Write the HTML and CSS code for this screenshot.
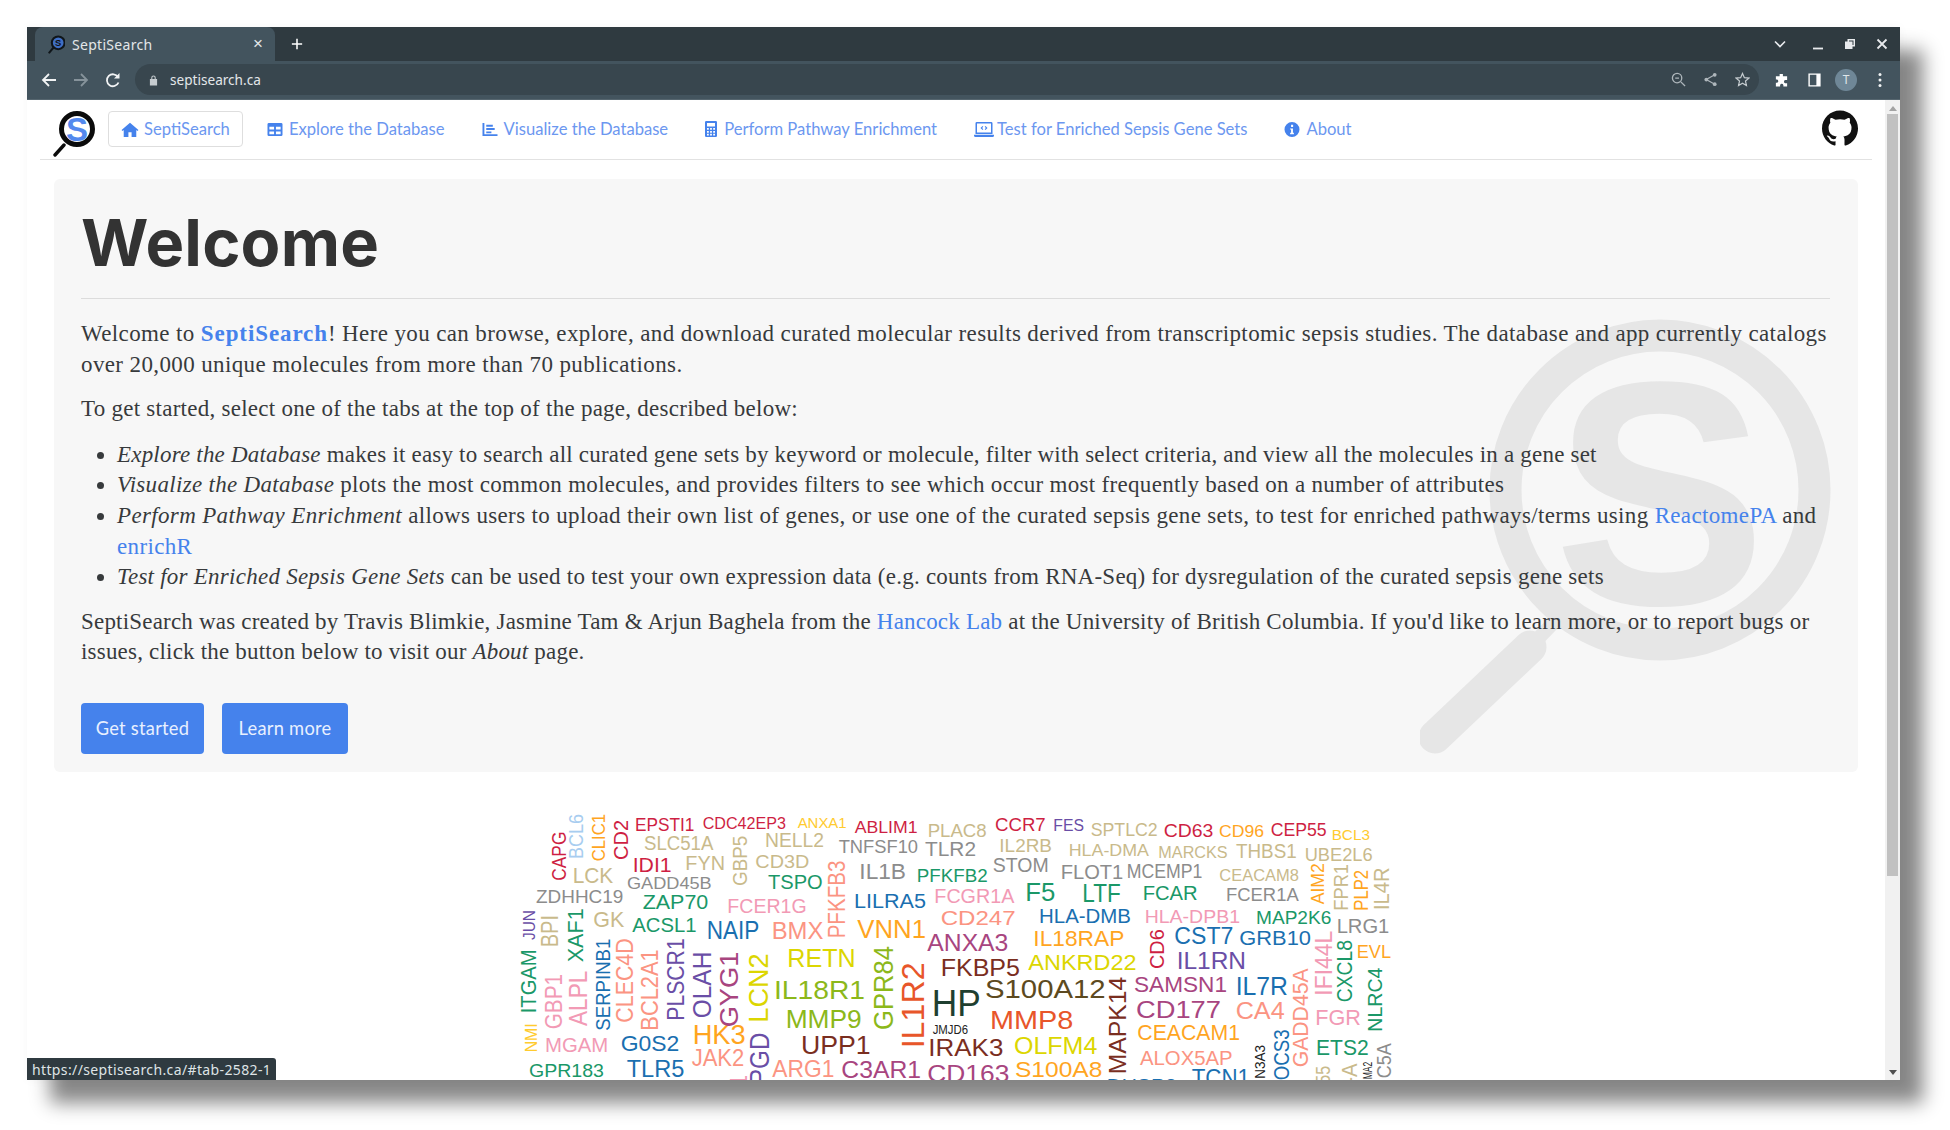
FILE: index.html
```html
<!DOCTYPE html>
<html lang="en">
<head>
<meta charset="utf-8">
<title>SeptiSearch</title>
<link rel="stylesheet" href="styles.css">
</head>
<body>
<div class="window">
  <div class="tabstrip">
    <div class="tab">
      <svg class="favicon" viewBox="0 0 20 22"><circle cx="12" cy="9" r="7.500" fill="#3f6fc4" stroke="#10161a" stroke-width="2.400"/><path d="M6.500 14.500 1.500 20.500" stroke="#10161a" stroke-width="2.400" stroke-linecap="round"/><text x="12" y="12.500" text-anchor="middle" class="fav-s">S</text></svg>
      <span class="tab-title">SeptiSearch</span>
      <span class="tab-close">×</span>
    </div>
    <svg class="newtab" viewBox="0 0 14 14"><path d="M7 1v12M1 7h12" stroke="#fff" stroke-width="1.800"/></svg>
    <div class="winctl">
      <svg class="ctl ctl-chev" viewBox="0 0 12 8"><path d="M1 1.500 6 6.500 11 1.500" fill="none" stroke="#e8eaed" stroke-width="1.600"/></svg>
      <svg class="ctl ctl-min" viewBox="0 0 12 12"><path d="M1 10.500h10" stroke="#e8eaed" stroke-width="1.800"/></svg>
      <svg class="ctl ctl-res" viewBox="0 0 12 12"><path d="M3.500 1h7.500v7.500H8.500V11H1V3.500h2.500z M5 2.500v1h3.500v3.500h1v-4.500z" fill="#e8eaed" fill-rule="evenodd"/></svg>
      <svg class="ctl ctl-x" viewBox="0 0 12 12"><path d="M1.500 1.500 10.500 10.500M10.500 1.500 1.500 10.500" stroke="#e8eaed" stroke-width="1.800"/></svg>
    </div>
  </div>
  <div class="toolbar">
    <svg class="tb tb-back" viewBox="0 0 16 16"><path d="M15 8H2M8 2 2 8l6 6" fill="none" stroke="#f1f3f4" stroke-width="1.800"/></svg>
    <svg class="tb tb-fwd" viewBox="0 0 16 16"><path d="M1 8h13M8 2l6 6-6 6" fill="none" stroke="#86939b" stroke-width="1.800"/></svg>
    <svg class="tb tb-reload" viewBox="0 0 16 16"><path d="M13.500 10.500A6 6 0 1 1 13 5" fill="none" stroke="#f1f3f4" stroke-width="1.800"/><path d="M14.500 1v5.500H9z" fill="#f1f3f4"/></svg>
    <div class="omnibox">
      <svg class="lock" viewBox="0 0 10 12"><path d="M2.500 5V3.500a2.500 2.500 0 0 1 5 0V5h1.500v7H1V5zM3.700 5h2.600V3.500a1.300 1.300 0 0 0-2.600 0z" fill="#c6ccd0" fill-rule="evenodd"/></svg>
      <span class="url">septisearch.ca</span>
      <div class="omni-icons">
        <svg class="oi" viewBox="0 0 16 16"><circle cx="6.500" cy="6.500" r="5" fill="none" stroke="#aeb6bb" stroke-width="1.400"/><path d="M10.500 10.500 15 15M4.500 6.500h4" stroke="#aeb6bb" stroke-width="1.400"/></svg>
        <svg class="oi" viewBox="0 0 16 16"><path d="M12.500 3 3.500 8l9 5" fill="none" stroke="#aeb6bb" stroke-width="1.300"/><circle cx="12.500" cy="3" r="2" fill="#aeb6bb"/><circle cx="3.500" cy="8" r="2" fill="#aeb6bb"/><circle cx="12.500" cy="13" r="2" fill="#aeb6bb"/></svg>
        <svg class="oi" viewBox="0 0 16 16"><path d="M8 1.500 10 6l4.800.5-3.600 3.200 1 4.800L8 12l-4.200 2.500 1-4.800L1.200 6.500 6 6z" fill="none" stroke="#c6ccd0" stroke-width="1.300"/></svg>
      </div>
    </div>
    <div class="tb-right">
      <svg class="tr" viewBox="0 0 16 16"><path d="M6 1.500h3.500v2.500H14v4h-2a1.800 1.800 0 0 0 0 3.500h2V15H10v-1.500a1.800 1.800 0 0 0-3.500 0V15H2v-4h1.200a1.800 1.800 0 0 0 0-3.500H2V4h4z" fill="#fff"/></svg>
      <svg class="tr" viewBox="0 0 16 16"><path d="M1.500 1h13v14h-13zM3 2.500v11h7v-11z" fill="#fff" fill-rule="evenodd"/></svg>
      <span class="avatar">T</span>
      <svg class="tr tr-dots" viewBox="0 0 4 16"><circle cx="2" cy="2.500" r="1.500" fill="#f1f3f4"/><circle cx="2" cy="8" r="1.500" fill="#f1f3f4"/><circle cx="2" cy="13.500" r="1.500" fill="#f1f3f4"/></svg>
    </div>
  </div>

  <div class="viewport">
    <div class="page">
      <nav class="nav">
        <svg class="logo" viewBox="0 0 44 46"><circle cx="24" cy="18" r="15.500" fill="#fff" stroke="#0b0b0b" stroke-width="5"/><path d="M11 34 2 44" stroke="#0b0b0b" stroke-width="3.400" stroke-linecap="round"/><text x="24" y="29.500" text-anchor="middle" class="logo-s">S</text></svg>
        <ul class="tabs">
          <li><a class="tab-link active"><svg class="nav-ico nav-ico-home" viewBox="0 0 18 16"><path d="M9 .8 0 8.500l1 1.200 1.300-1.100V16h5v-5h3.400v5h5V8.600L17 9.700l1-1.200z"/></svg>SeptiSearch</a></li>
          <li><a class="tab-link"><svg class="nav-ico" viewBox="0 0 16 16"><path d="M1.500 1h13A1.500 1.500 0 0 1 16 2.500v11a1.500 1.500 0 0 1-1.500 1.500h-13A1.500 1.500 0 0 1 0 13.500v-11A1.500 1.500 0 0 1 1.500 1zM2 5v3h5V5zm7 0v3h5V5zM2 10v3h5v-3zm7 0v3h5v-3z" fill-rule="evenodd"/></svg>Explore the Database</a></li>
          <li><a class="tab-link"><svg class="nav-ico" viewBox="0 0 16 16"><path d="M0 1h2v12h14v2H0zM4 3h7v2H4zM4 6.500h9v2H4zM4 10h5.500v2H4z"/></svg>Visualize the Database</a></li>
          <li><a class="tab-link"><svg class="nav-ico nav-ico-file" viewBox="0 0 12 16"><path d="M1.200 0h9.600A1.200 1.200 0 0 1 12 1.200v13.600a1.200 1.200 0 0 1-1.200 1.200H1.200A1.200 1.200 0 0 1 0 14.800V1.200A1.200 1.200 0 0 1 1.200 0zM2 2v3.500h8V2zM2 7v1.800h1.800V7zm3.100 0v1.800h1.800V7zm3.100 0v1.800H10V7zM2 10v1.800h1.800V10zm3.100 0v1.800h1.800V10zm3.100 0v1.800H10V10zM2 12.800V14.500h1.800v-1.700zm3.100 0v1.700h1.800v-1.700zm3.100 0v1.700H10v-1.700z" fill-rule="evenodd"/></svg>Perform Pathway Enrichment</a></li>
          <li><a class="tab-link"><svg class="nav-ico nav-ico-wide" viewBox="0 0 20 15"><path d="M2.800 0h14.400A1.300 1.300 0 0 1 18.500 1.300V12h-17V1.300A1.300 1.300 0 0 1 2.800 0zM3 1.500V10.500h14V1.500zM0 12.800h20v.7A1.500 1.500 0 0 1 18.500 15h-17A1.500 1.500 0 0 1 0 13.500zM8.500 4 6.500 6l2 2 .8-.8L8.100 6l1.200-1.200zM11.500 4l2 2-2 2-.8-.8L11.900 6l-1.200-1.200z" fill-rule="evenodd"/></svg>Test for Enriched Sepsis Gene Sets</a></li>
          <li><a class="tab-link"><svg class="nav-ico" viewBox="0 0 16 16"><path d="M8 0a8 8 0 1 1 0 16A8 8 0 0 1 8 0zM7 3v2.200h2.200V3zM6 6.800V8h1v3.500H6V13h4v-1.500H9V6.800z" fill-rule="evenodd"/></svg>About</a></li>
        </ul>
        <svg class="github" viewBox="0 0 16 16"><path d="M8 0C3.580 0 0 3.580 0 8c0 3.540 2.290 6.530 5.470 7.590.4.070.55-.17.55-.38 0-.19-.01-.82-.01-1.490-2.010.37-2.530-.49-2.690-.94-.09-.23-.48-.94-.82-1.130-.28-.15-.68-.52-.01-.53.63-.01 1.080.58 1.230.82.72 1.210 1.870.87 2.330.66.07-.52.28-.87.51-1.070-1.780-.2-3.640-.89-3.640-3.950 0-.87.31-1.590.82-2.150-.08-.2-.36-1.020.08-2.120 0 0 .67-.21 2.200.82.64-.18 1.320-.27 2-.27.68 0 1.360.09 2 .27 1.530-1.040 2.200-.82 2.200-.82.44 1.100.16 1.920.08 2.120.51.56.82 1.270.82 2.150 0 3.070-1.870 3.750-3.650 3.950.29.25.54.73.54 1.480 0 1.070-.01 1.930-.01 2.200 0 .21.15.46.55.38A8.013 8.013 0 0 0 16 8c0-4.420-3.580-8-8-8z"/></svg>
      </nav>

      <section class="jumbotron">
        <svg class="watermark" viewBox="0 0 420 460">
          <circle cx="240" cy="181" r="154.500" fill="none" stroke="#e6e6e6" stroke-width="32"/>
          <path d="M110 338 137 310" stroke="#e6e6e6" stroke-width="14"/>
          <path d="M15 428 110 338" stroke="#e6e6e6" stroke-width="33" stroke-linecap="round"/>
          <text x="240" y="295" text-anchor="middle" class="wm-s">S</text>
        </svg>
        <div class="jumbo-body">
          <h1 class="display">Welcome</h1>
          <hr class="rule">
          <p class="para para-lead">Welcome to <a class="link strong">SeptiSearch</a>! Here you can browse, explore, and download curated molecular results derived from transcriptomic sepsis studies. The database and app currently catalogs over 20,000 unique molecules from more than 70 publications.</p>
          <p class="para">To get started, select one of the tabs at the top of the page, described below:</p>
          <ul class="features">
            <li><em>Explore the Database</em> makes it easy to search all curated gene sets by keyword or molecule, filter with select criteria, and view all the molecules in a gene set</li>
            <li><em>Visualize the Database</em> plots the most common molecules, and provides filters to see which occur most frequently based on a number of attributes</li>
            <li><em>Perform Pathway Enrichment</em> allows users to upload their own list of genes, or use one of the curated sepsis gene sets, to test for enriched pathways/terms using <a class="link">ReactomePA</a> and <a class="link">enrichR</a></li>
            <li><em>Test for Enriched Sepsis Gene Sets</em> can be used to test your own expression data (e.g. counts from RNA-Seq) for dysregulation of the curated sepsis gene sets</li>
          </ul>
          <p class="para para-last">SeptiSearch was created by Travis Blimkie, Jasmine Tam &amp; Arjun Baghela from the <a class="link">Hancock Lab</a> at the University of British Columbia. If you'd like to learn more, or to report bugs or issues, click the button below to visit our <em>About</em> page.</p>
          <div class="actions">
            <a class="btn btn-a">Get started</a>
            <a class="btn btn-b">Learn more</a>
          </div>
        </div>
      </section>

      <svg class="cloud" viewBox="0 0 2850 870">
        <g class="r"><text x="405" y="122" font-size="56" textLength="178" lengthAdjust="spacingAndGlyphs">EPSTI1</text><text x="608" y="117" font-size="49" textLength="250" lengthAdjust="spacingAndGlyphs">CDC42EP3</text><text x="1064" y="128" font-size="49" textLength="189" lengthAdjust="spacingAndGlyphs">ABLIM1</text><text x="398" y="245" font-size="61" textLength="117" lengthAdjust="spacingAndGlyphs">IDI1</text>
          <text transform="translate(385 210) rotate(-90)" font-size="63" textLength="120" lengthAdjust="spacingAndGlyphs">CD2</text><text transform="translate(198 272) rotate(-90)" font-size="60" textLength="147" lengthAdjust="spacingAndGlyphs">CAPG</text></g>
        <g class="gd"><text x="893" y="114" font-size="45" textLength="147" lengthAdjust="spacingAndGlyphs">ANXA1</text><text transform="translate(112 787) rotate(-90)" font-size="52" textLength="87" lengthAdjust="spacingAndGlyphs">NMI</text></g>
        <g class="t"><text x="1283" y="140" font-size="56" textLength="177" lengthAdjust="spacingAndGlyphs">PLAC8</text><text x="432" y="180" font-size="60" textLength="208" lengthAdjust="spacingAndGlyphs">SLC51A</text><text x="795" y="171" font-size="59" textLength="177" lengthAdjust="spacingAndGlyphs">NELL2</text><text x="556" y="241" font-size="61" textLength="119" lengthAdjust="spacingAndGlyphs">FYN</text><text x="766" y="233" font-size="55" textLength="162" lengthAdjust="spacingAndGlyphs">CD3D</text><text x="218" y="278" font-size="64" textLength="122" lengthAdjust="spacingAndGlyphs">LCK</text><text x="280" y="412" font-size="64" textLength="93" lengthAdjust="spacingAndGlyphs">GK</text>
          <text transform="translate(740 288) rotate(-90)" font-size="59" textLength="151" lengthAdjust="spacingAndGlyphs">GBP5</text><text transform="translate(175 472) rotate(-90)" font-size="70" textLength="97" lengthAdjust="spacingAndGlyphs">BPI</text></g>
        <g class="y"><text x="1016" y="188" font-size="56" textLength="238" lengthAdjust="spacingAndGlyphs">TNFSF10</text><text x="1275" y="197" font-size="61" textLength="153" lengthAdjust="spacingAndGlyphs">TLR2</text><text x="1078" y="266" font-size="66" textLength="140" lengthAdjust="spacingAndGlyphs">IL1B</text><text x="381" y="298" font-size="48" textLength="254" lengthAdjust="spacingAndGlyphs">GADD45B</text><text x="108" y="338" font-size="56" textLength="262" lengthAdjust="spacingAndGlyphs">ZDHHC19</text></g>
        <g class="g"><text x="1250" y="275" font-size="57" textLength="213" lengthAdjust="spacingAndGlyphs">PFKFB2</text><text x="804" y="297" font-size="59" textLength="164" lengthAdjust="spacingAndGlyphs">TSPO</text><text x="428" y="358" font-size="59" textLength="197" lengthAdjust="spacingAndGlyphs">ZAP70</text><text x="397" y="426" font-size="62" textLength="193" lengthAdjust="spacingAndGlyphs">ACSL1</text><text x="87" y="862" font-size="53" textLength="225" lengthAdjust="spacingAndGlyphs">GPR183</text>
          <text transform="translate(250 517) rotate(-90)" font-size="67" textLength="162" lengthAdjust="spacingAndGlyphs">XAF1</text><text transform="translate(108 670) rotate(-90)" font-size="64" textLength="192" lengthAdjust="spacingAndGlyphs">ITGAM</text></g>
        <g class="b"><text x="1062" y="354" font-size="62" textLength="216" lengthAdjust="spacingAndGlyphs">LILRA5</text><text x="620" y="447" font-size="76" textLength="158" lengthAdjust="spacingAndGlyphs">NAIP</text><text x="362" y="783" font-size="64" textLength="176" lengthAdjust="spacingAndGlyphs">G0S2</text><text x="380" y="861" font-size="70" textLength="173" lengthAdjust="spacingAndGlyphs">TLR5</text>
          <text transform="translate(330 722) rotate(-90)" font-size="63" textLength="276" lengthAdjust="spacingAndGlyphs">SERPINB1</text></g>
        <g class="p"><text x="682" y="368" font-size="60" textLength="238" lengthAdjust="spacingAndGlyphs">FCER1G</text><text x="1303" y="338" font-size="60" textLength="240" lengthAdjust="spacingAndGlyphs">FCGR1A</text><text x="135" y="785" font-size="59" textLength="190" lengthAdjust="spacingAndGlyphs">MGAM</text>
          <text transform="translate(185 718) rotate(-90)" font-size="70" textLength="166" lengthAdjust="spacingAndGlyphs">GBP1</text><text transform="translate(260 708) rotate(-90)" font-size="80" textLength="166" lengthAdjust="spacingAndGlyphs">ALPL</text><text transform="translate(740 1100) rotate(-90)" font-size="70" textLength="245" lengthAdjust="spacingAndGlyphs">CD300E1</text></g>
        <g class="s"><text x="815" y="446" font-size="74" textLength="155" lengthAdjust="spacingAndGlyphs">BMX</text><text x="1322" y="406" font-size="62" textLength="225" lengthAdjust="spacingAndGlyphs">CD247</text><text x="817" y="862" font-size="71" textLength="186" lengthAdjust="spacingAndGlyphs">ARG1</text><text x="575" y="828" font-size="71" textLength="158" lengthAdjust="spacingAndGlyphs">JAK2</text>
          <text transform="translate(1035 445) rotate(-90)" font-size="70" textLength="233" lengthAdjust="spacingAndGlyphs">PFKFB3</text><text transform="translate(400 698) rotate(-90)" font-size="70" textLength="253" lengthAdjust="spacingAndGlyphs">CLEC4D</text><text transform="translate(475 722) rotate(-90)" font-size="70" textLength="244" lengthAdjust="spacingAndGlyphs">BCL2A1</text></g>
        <g class="o"><text x="1072" y="445" font-size="76" textLength="206" lengthAdjust="spacingAndGlyphs">VNN1</text><text x="578" y="762" font-size="83" textLength="159" lengthAdjust="spacingAndGlyphs">HK3</text>
          <text transform="translate(316 214) rotate(-90)" font-size="57" textLength="142" lengthAdjust="spacingAndGlyphs">CLIC1</text></g>
        <g class="lb"><text transform="translate(250 207) rotate(-90)" font-size="59" textLength="135" lengthAdjust="spacingAndGlyphs">BCL6</text></g>
        <g class="m"><text x="1282" y="482" font-size="73" textLength="243" lengthAdjust="spacingAndGlyphs">ANXA3</text><text x="1024" y="864" font-size="73" textLength="239" lengthAdjust="spacingAndGlyphs">C3AR1</text><text x="1282" y="875" font-size="69" textLength="246" lengthAdjust="spacingAndGlyphs">CD163</text>
          <text transform="translate(715 712) rotate(-90)" font-size="80" textLength="227" lengthAdjust="spacingAndGlyphs">GYG1</text></g>
        <g class="l"><text x="862" y="530" font-size="77" textLength="205" lengthAdjust="spacingAndGlyphs">RETN</text>
          <text transform="translate(803 698) rotate(-90)" font-size="81" textLength="208" lengthAdjust="spacingAndGlyphs">LCN2</text></g>
        <g class="ol"><text x="822" y="627" font-size="80" textLength="273" lengthAdjust="spacingAndGlyphs">IL18R1</text><text x="857" y="715" font-size="77" textLength="228" lengthAdjust="spacingAndGlyphs">MMP9</text>
          <text transform="translate(1180 720) rotate(-90)" font-size="81" textLength="252" lengthAdjust="spacingAndGlyphs">GPR84</text></g>
        <g class="br"><text x="1322" y="558" font-size="74" textLength="238" lengthAdjust="spacingAndGlyphs">FKBP5</text><text x="903" y="792" font-size="77" textLength="209" lengthAdjust="spacingAndGlyphs">UPP1</text><text x="1285" y="798" font-size="74" textLength="225" lengthAdjust="spacingAndGlyphs">IRAK3</text>
          <text transform="translate(1878 853) rotate(-90)" font-size="74" textLength="293" lengthAdjust="spacingAndGlyphs">MAPK14</text></g>
        <g class="ob"><text x="1455" y="625" font-size="77" textLength="362" lengthAdjust="spacingAndGlyphs">S100A12</text></g>
        <g class="dg"><text x="1295" y="678" font-size="109" textLength="147" lengthAdjust="spacingAndGlyphs">HP</text></g>
        <g class="or"><text x="1470" y="717" font-size="77" textLength="250" lengthAdjust="spacingAndGlyphs">MMP8</text>
          <text transform="translate(1272 775) rotate(-90)" font-size="94" textLength="258" lengthAdjust="spacingAndGlyphs">IL1R2</text></g>
        <g class="k"><text x="1298" y="731" font-size="36" textLength="106" lengthAdjust="spacingAndGlyphs">JMJD6</text></g>
        <g class="v"><text transform="translate(106 450) rotate(-90)" font-size="50" textLength="90" lengthAdjust="spacingAndGlyphs">JUN</text><text transform="translate(552 692) rotate(-90)" font-size="73" textLength="247" lengthAdjust="spacingAndGlyphs">PLSCR1</text><text transform="translate(632 685) rotate(-90)" font-size="77" textLength="200" lengthAdjust="spacingAndGlyphs">OLAH</text><text transform="translate(808 885) rotate(-90)" font-size="81" textLength="157" lengthAdjust="spacingAndGlyphs">PGD</text></g>

        <g transform="translate(1350 0)">
          <g class="r"><text x="135" y="123" font-size="57" textLength="152" lengthAdjust="spacingAndGlyphs">CCR7</text><text x="641" y="140" font-size="55" textLength="149" lengthAdjust="spacingAndGlyphs">CD63</text><text x="962" y="138" font-size="53" textLength="168" lengthAdjust="spacingAndGlyphs">CEP55</text>
            <text transform="translate(642 537) rotate(-90)" font-size="63" textLength="119" lengthAdjust="spacingAndGlyphs">CD6</text></g>
          <g class="v"><text x="310" y="122" font-size="48" textLength="92" lengthAdjust="spacingAndGlyphs">FES</text><text x="680" y="536" font-size="74" textLength="208" lengthAdjust="spacingAndGlyphs">IL1RN</text></g>
          <g class="t"><text x="422" y="137" font-size="55" textLength="201" lengthAdjust="spacingAndGlyphs">SPTLC2</text><text x="148" y="186" font-size="57" textLength="158" lengthAdjust="spacingAndGlyphs">IL2RB</text><text x="356" y="198" font-size="50" textLength="241" lengthAdjust="spacingAndGlyphs">HLA-DMA</text><text x="625" y="204" font-size="50" textLength="208" lengthAdjust="spacingAndGlyphs">MARCKS</text><text x="858" y="204" font-size="59" textLength="182" lengthAdjust="spacingAndGlyphs">THBS1</text><text x="1064" y="212" font-size="56" textLength="204" lengthAdjust="spacingAndGlyphs">UBE2L6</text><text x="808" y="274" font-size="50" textLength="239" lengthAdjust="spacingAndGlyphs">CEACAM8</text>
            <text transform="translate(1195 362) rotate(-90)" font-size="63" textLength="140" lengthAdjust="spacingAndGlyphs">FPR1</text><text transform="translate(1318 360) rotate(-90)" font-size="64" textLength="128" lengthAdjust="spacingAndGlyphs">IL4R</text><text transform="translate(1222 1000) rotate(-90)" font-size="66" textLength="180" lengthAdjust="spacingAndGlyphs">HLA-A</text><text transform="translate(1140 950) rotate(-90)" font-size="60" textLength="122" lengthAdjust="spacingAndGlyphs">CD55</text></g>
          <g class="o"><text x="807" y="140" font-size="49" textLength="135" lengthAdjust="spacingAndGlyphs">CD96</text><text x="250" y="467" font-size="66" textLength="273" lengthAdjust="spacingAndGlyphs">IL18RAP</text><text x="1220" y="503" font-size="57" textLength="103" lengthAdjust="spacingAndGlyphs">EVL</text><text x="562" y="749" font-size="64" textLength="308" lengthAdjust="spacingAndGlyphs">CEACAM1</text><text x="195" y="862" font-size="64" textLength="262" lengthAdjust="spacingAndGlyphs">S100A8</text>
            <text transform="translate(1122 343) rotate(-90)" font-size="55" textLength="123" lengthAdjust="spacingAndGlyphs">AIM2</text><text transform="translate(1255 362) rotate(-90)" font-size="60" textLength="122" lengthAdjust="spacingAndGlyphs">PLP2</text></g>
          <g class="gd"><text x="1145" y="150" font-size="45" textLength="115" lengthAdjust="spacingAndGlyphs">BCL3</text></g>
          <g class="y"><text x="128" y="246" font-size="63" textLength="168" lengthAdjust="spacingAndGlyphs">STOM</text><text x="332" y="266" font-size="62" textLength="188" lengthAdjust="spacingAndGlyphs">FLOT1</text><text x="530" y="264" font-size="59" textLength="227" lengthAdjust="spacingAndGlyphs">MCEMP1</text><text x="828" y="332" font-size="56" textLength="218" lengthAdjust="spacingAndGlyphs">FCER1A</text><text x="1160" y="428" font-size="59" textLength="158" lengthAdjust="spacingAndGlyphs">LRG1</text>
            <text transform="translate(1322 865) rotate(-90)" font-size="62" textLength="105" lengthAdjust="spacingAndGlyphs">C5A</text></g>
          <g class="g"><text x="226" y="332" font-size="78" textLength="90" lengthAdjust="spacingAndGlyphs">F5</text><text x="397" y="336" font-size="76" textLength="115" lengthAdjust="spacingAndGlyphs">LTF</text><text x="578" y="329" font-size="62" textLength="165" lengthAdjust="spacingAndGlyphs">FCAR</text><text x="918" y="402" font-size="56" textLength="226" lengthAdjust="spacingAndGlyphs">MAP2K6</text><text x="1098" y="794" font-size="64" textLength="158" lengthAdjust="spacingAndGlyphs">ETS2</text>
            <text transform="translate(1205 637) rotate(-90)" font-size="67" textLength="187" lengthAdjust="spacingAndGlyphs">CXCL8</text><text transform="translate(1297 725) rotate(-90)" font-size="63" textLength="192" lengthAdjust="spacingAndGlyphs">NLRC4</text></g>
          <g class="b"><text x="267" y="398" font-size="59" textLength="276" lengthAdjust="spacingAndGlyphs">HLA-DMB</text><text x="673" y="463" font-size="70" textLength="177" lengthAdjust="spacingAndGlyphs">CST7</text><text x="868" y="466" font-size="60" textLength="215" lengthAdjust="spacingAndGlyphs">GRB10</text><text x="857" y="614" font-size="76" textLength="157" lengthAdjust="spacingAndGlyphs">IL7R</text><text x="725" y="888" font-size="70" textLength="175" lengthAdjust="spacingAndGlyphs">TCN1</text><text x="470" y="905" font-size="56" textLength="210" lengthAdjust="spacingAndGlyphs">DUSP3</text>
            <text transform="translate(1018 908) rotate(-90)" font-size="64" textLength="190" lengthAdjust="spacingAndGlyphs">SOCS3</text></g>
          <g class="p"><text x="584" y="400" font-size="56" textLength="286" lengthAdjust="spacingAndGlyphs">HLA-DPB1</text><text x="1096" y="706" font-size="64" textLength="137" lengthAdjust="spacingAndGlyphs">FGR</text>
            <text transform="translate(1147 617) rotate(-90)" font-size="70" textLength="195" lengthAdjust="spacingAndGlyphs">IFI44L</text></g>
          <g class="l"><text x="235" y="539" font-size="64" textLength="325" lengthAdjust="spacingAndGlyphs">ANKRD22</text><text x="192" y="793" font-size="71" textLength="250" lengthAdjust="spacingAndGlyphs">OLFM4</text></g>
          <g class="m"><text x="552" y="605" font-size="66" textLength="279" lengthAdjust="spacingAndGlyphs">SAMSN1</text><text x="558" y="684" font-size="73" textLength="255" lengthAdjust="spacingAndGlyphs">CD177</text></g>
          <g class="s"><text x="857" y="688" font-size="73" textLength="147" lengthAdjust="spacingAndGlyphs">CA4</text><text x="570" y="824" font-size="62" textLength="278" lengthAdjust="spacingAndGlyphs">ALOX5AP</text>
            <text transform="translate(1075 832) rotate(-90)" font-size="66" textLength="297" lengthAdjust="spacingAndGlyphs">GADD45A</text></g>
          <g class="k"><text transform="translate(945 866) rotate(-90)" font-size="42" textLength="101" lengthAdjust="spacingAndGlyphs">N3A3</text><text transform="translate(1265 868) rotate(-90)" font-size="36" textLength="53" lengthAdjust="spacingAndGlyphs">MA2</text></g>
        </g>
      </svg>
    </div>
    <div class="scrollbar">
      <span class="arrow arrow-up"></span>
      <span class="thumb"></span>
      <span class="arrow arrow-down"></span>
    </div>
    <div class="status">https://septisearch.ca/#tab-2582-1</div>
  </div>
</div>
</body>
</html>
```

FILE: styles.css
```css
* { box-sizing: border-box; }
html, body { margin: 0; height: 100%; background: #fff; }
body { padding: 27px 50px 50px 27px; overflow: hidden; }

.window {
  width: 1873px;
  height: 1053px;
  display: flex;
  flex-direction: column;
  background: #fff;
  box-shadow: 23px 23px 18px rgba(0,0,0,.47), 0 0 10px rgba(0,0,0,.04);
}

/* browser chrome */
.tabstrip { height: 34px; flex: none; background: #2f3a40; display: flex; align-items: flex-end; padding-left: 8px; }
.tab { width: 240px; height: 34px; background: #43545e; border-radius: 8px 8px 0 0; display: flex; align-items: center; padding-left: 13px; }
.favicon { width: 17px; height: 19px; margin-right: 7px; }
.fav-s { font: 700 11px "Liberation Sans", sans-serif; fill: #111; }
.tab-title { font: 14px "Noto Sans", sans-serif; color: #e3e7e9; width: 150px; white-space: nowrap; letter-spacing: .3px; }
.tab-close { color: #e3e7e9; font: 17px "Liberation Sans", sans-serif; margin-left: 31px; }
.newtab { width: 12px; height: 12px; margin: 0 0 11px 16px; }
.winctl { margin-left: auto; height: 34px; display: flex; align-items: center; }
.ctl { width: 12px; height: 12px; }
.ctl-chev { margin-right: 26px; height: 8px; }
.ctl-min { margin-right: 20px; }
.ctl-res { margin-right: 20px; }
.ctl-x { margin-right: 12px; }

.toolbar { height: 39px; flex: none; background: #43545e; display: flex; align-items: center; padding: 1px 0 2px 14px; border-bottom: 1px solid #56666f; }
.tb { width: 16px; height: 16px; flex: none; }
.tb-fwd { margin-left: 16px; }
.tb-reload { margin-left: 16px; }
.omnibox { flex: none; width: 1624px; height: 31px; margin-left: 14px; background: #38464e; border-radius: 16px; display: flex; align-items: center; padding-left: 14px; }
.lock { width: 9px; height: 12px; }
.url { font: 13.600px "Noto Sans", sans-serif; color: #e3e7e9; margin-left: 12px; }
.omni-icons { margin-left: auto; display: flex; gap: 17px; padding-right: 9px; }
.oi { width: 15px; height: 15px; }
.tb-right { display: flex; align-items: center; margin-left: 15px; }
.tr { width: 15px; height: 16px; margin-right: 18px; }
.avatar { width: 22px; height: 22px; border-radius: 50%; background: #6f8797; color: #dfe6ea; font: 12px "Noto Sans", sans-serif; display: flex; align-items: center; justify-content: center; margin: 0 21px 0 -5px; }
.tr-dots { width: 4px; margin-right: 0; }

/* page */
.viewport { flex: 1; min-height: 0; display: flex; position: relative; }
.page { flex: 1; min-width: 0; overflow: hidden; padding: 0 13px; }
.nav { height: 60px; border-bottom: 1px solid #e2e2e2; display: flex; align-items: center; padding-left: 13px; }
.logo { width: 44px; height: 46px; margin: 8px 11px 0 0; flex: none; }
.logo-s { font: 700 33px "Liberation Sans", sans-serif; fill: #5389ee; }
.tabs { list-style: none; margin: 0 0 1px; padding: 0; display: flex; align-items: center; gap: 11px; }
.tab-link { display: flex; align-items: center; height: 36px; padding: 0 12px; border: 1px solid transparent; border-radius: 4px; font: 400 16.600px Lato, sans-serif; color: #6c97f0; white-space: nowrap; }
.tab-link.active { border-color: #dedede; }
.nav-ico { width: 16px; height: 15px; margin-right: 6px; fill: #4582ec; flex: none; }
.nav-ico-home { width: 18px; margin-right: 5px; }
.nav-ico-file { width: 12px; height: 16px; margin-right: 7px; }
.nav-ico-wide { width: 20px; margin-right: 3px; }
.github { width: 36px; height: 37px; margin: 0 14px 2px auto; fill: #111; flex: none; }

.jumbotron { position: relative; margin: 19px 14px 0; height: 593px; background: #f7f7f7; border-radius: 6px; }
.watermark { position: absolute; top: 130px; right: 18px; width: 420px; height: 460px; }
.wm-s { font: 700 319px "Liberation Sans", sans-serif; fill: #e6e6e6; }
.jumbo-body { position: relative; padding: 25px 28px 0 27px; font: 23px/30.600px "Liberation Serif", serif; color: #373a3c; letter-spacing: .26px; }
.display { margin: 0; font: 700 65px/78px Inter, sans-serif; color: #333; letter-spacing: .2px; }
.rule { border: 0; border-top: 1px solid #dcdcdc; margin: 16px 0 20px; }
.para { margin: 0 0 14px; }
.para-lead { letter-spacing: .38px; }
.para-last { letter-spacing: .2px; }
.features { margin: 0 0 14px; padding: 1px 0 0 36px; }
.features li:nth-child(1) { letter-spacing: .2px; }
.features li:nth-child(2) { letter-spacing: .31px; }
.features li:nth-child(3) { letter-spacing: .35px; }
.features li:nth-child(4) { letter-spacing: .25px; }
.link { color: #4582ec; }
.strong { font-weight: 700; letter-spacing: .9px; }
.actions { display: flex; gap: 18px; margin-top: 35px; }
.btn { height: 51px; display: flex; align-items: center; justify-content: center; background: #4582ec; border-radius: 4px; color: #e8f0ff; font: 400 18.300px Lato, sans-serif; }
.btn-a { width: 123px; }
.btn-b { width: 126px; }

.cloud { display: block; width: 950px; height: 290px; margin: 18px 0 0 459.500px; font-family: "Liberation Sans", sans-serif; }
.r { fill: #ce1f43; } .gd { fill: #ffcb2f; } .t { fill: #c9ba8b; } .y { fill: #8c8c8c; }
.g { fill: #1a9868; } .b { fill: #1a6fb0; } .p { fill: #f29ab5; } .s { fill: #fb9482; }
.o { fill: #ffa51f; } .lb { fill: #a8cdf0; } .m { fill: #a8457f; } .l { fill: #dcd600; }
.ol { fill: #8cb81a; } .br { fill: #7a2e1f; } .ob { fill: #5d4a20; } .dg { fill: #1f3f30; }
.or { fill: #e8562a; } .k { fill: #222; } .v { fill: #6a4ea6; }

.scrollbar { width: 15px; flex: none; background: #f1f1f1; display: flex; flex-direction: column; align-items: center; position: relative; }
.thumb { width: 11px; height: 762px; background: #c1c1c1; margin-top: 3px; }
.arrow { width: 0; height: 0; border-left: 4px solid transparent; border-right: 4px solid transparent; }
.arrow-up { border-bottom: 5px solid #a3a3a3; margin-top: 6px; }
.arrow-down { border-top: 5px solid #505050; margin-top: auto; margin-bottom: 5px; }

.status { position: absolute; left: 0; bottom: 0; height: 22px; width: 249px; padding-left: 5px; background: #2f3a40; border-radius: 0 3px 0 0; color: #dfe4e6; font: 14px/23px "Noto Sans", sans-serif; letter-spacing: .37px; white-space: nowrap; }
```
